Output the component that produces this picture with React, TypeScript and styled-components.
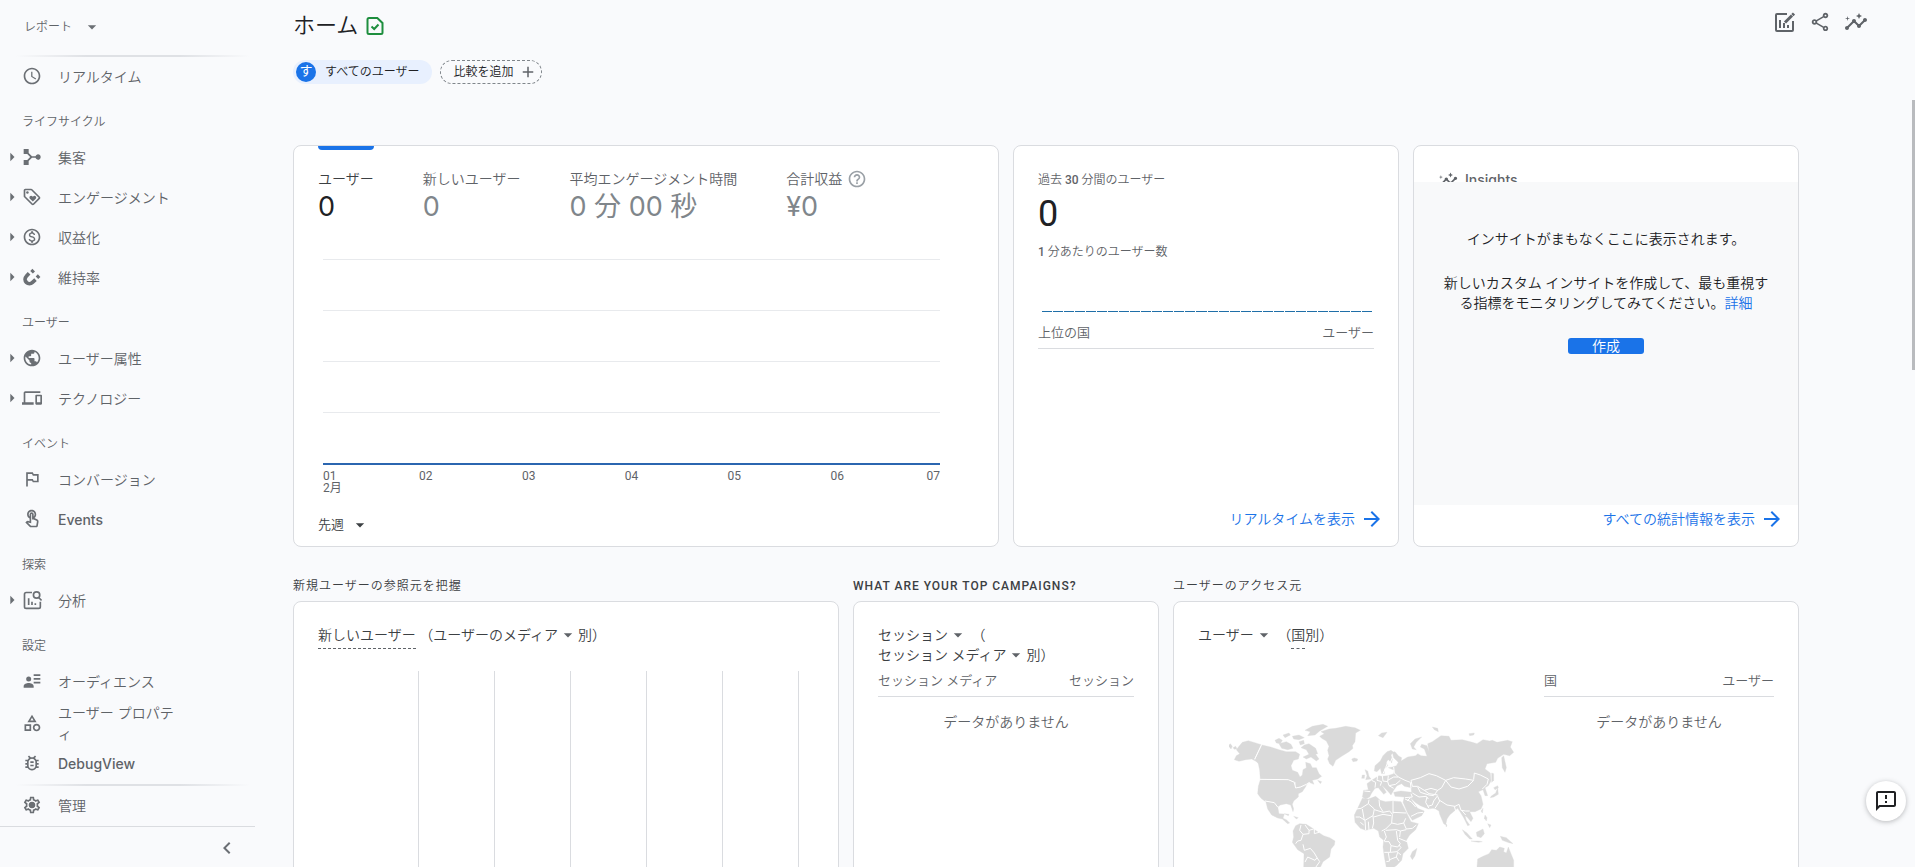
import React from "react";
import styled, { createGlobalStyle } from "styled-components";
import {
  MdAdd,
  MdArrowDropDown,
  MdArrowForward,
  MdArrowRight,
  MdChevronLeft,
  MdDevices,
  MdHelpOutline,
  MdInsights,
  MdOutlineBugReport,
  MdOutlineCategory,
  MdOutlineFeedback,
  MdOutlinedFlag,
  MdOutlineLoyalty,
  MdOutlineMonetizationOn,
  MdOutlineSettings,
  MdOutlineShare,
  MdOutlineTouchApp,
  MdPublic,
  MdSchedule,
} from "react-icons/md";

const uiFont = `Roboto, "Noto Sans CJK JP", sans-serif`;
const displayFont = `Inter, "Noto Sans CJK JP", sans-serif`;
const textWeight = 350;

const GlobalStyle = createGlobalStyle`
  *, *::before, *::after { box-sizing: border-box; }
  body {
    margin: 0;
    background: #f9fafc;
    color: #3c4043;
    font-family: ${uiFont};
    font-size: 14px;
    line-height: 20px;
    overflow: hidden;
  }
  h1, h2, h3, p, ul { margin: 0; padding: 0; font-size: 14px; font-weight: ${textWeight}; }
  button { border: 0; padding: 0; background: none; font: inherit; color: inherit; cursor: pointer; }
  a { color: inherit; text-decoration: none; }
  svg { display: block; flex: none; }
`;

const Page = styled.div`
  display: flex;
  height: 100vh;
  font-weight: ${textWeight};
`;

/* ---------- sidebar ---------- */

const Sidebar = styled.nav`
  flex: none;
  width: 255px;
  display: flex;
  flex-direction: column;
  color: #5f6368;
  font-family: ${displayFont};
  svg { color: #6b6f74; }
`;

const ReportPicker = styled.button`
  display: flex;
  align-items: center;
  gap: 10px;
  height: 55px;
  padding: 0 0 1px 24px;
  font-size: 12px;
`;

const FadeRule = styled.hr`
  flex: none;
  width: 234px;
  height: 2px;
  margin: 0 0 0 16px;
  border: 0;
  background: linear-gradient(90deg, transparent, #dfe1e5 30%, #dfe1e5 70%, transparent);
`;

const GroupTitle = styled.h2`
  height: 41px;
  padding: 15px 0 0 22px;
  font-size: 12px;
`;

const NavLink = styled.a<{ $tall?: boolean }>`
  display: grid;
  grid-template-columns: 20px 20px 138px;
  align-items: center;
  height: ${(p) => (p.$tall ? 42 : 40)}px;
  padding: 0 0 2px 2px;
  line-height: 21px;
`;

const NavText = styled.span<{ $latin?: boolean }>`
  padding-left: 16px;
  font-weight: ${(p) => (p.$latin ? 500 : textWeight)};
`;

const Expander = styled.span`
  display: flex;
`;

const Collapse = styled.div`
  flex: 1;
  display: flex;
  align-items: flex-start;
  justify-content: flex-end;
  padding: 9px 16px 0 0;
  border-top: 1px solid #dadce0;
`;

/* ---------- main frame ---------- */

const Main = styled.main`
  flex: 1;
  min-width: 0;
  overflow: hidden;
  padding: 0 116px 0 38px;
`;

const TitleBar = styled.header`
  display: flex;
  align-items: center;
  justify-content: space-between;
  height: 48px;
  margin-right: -80px;
`;

const TitleGroup = styled.div`
  display: flex;
  align-items: center;
  gap: 8px;
  padding-top: 3px;
`;

const PageTitle = styled.h1`
  font-size: 22px;
  line-height: 32px;
  color: #202124;
`;

const Tools = styled.div`
  display: flex;
  gap: 13px;
  padding: 0 11px 4px 0;
  color: #5f6368;
`;

const Chips = styled.div`
  display: flex;
  align-items: center;
  gap: 8px;
  height: 48px;
  font-size: 12px;
  color: #202124;
`;

const AudienceChip = styled.button`
  display: flex;
  align-items: center;
  gap: 9px;
  height: 24px;
  padding: 0 13px 0 3px;
  border-radius: 12px;
  background: #e8f0fe;
`;

const Avatar = styled.span`
  width: 20px;
  height: 20px;
  border-radius: 50%;
  background: #1a73e8;
  color: #fff;
  font-size: 13px;
  font-weight: 400;
  line-height: 18px;
  text-align: center;
`;

const AddChip = styled.button`
  display: flex;
  align-items: center;
  gap: 6px;
  height: 24px;
  padding: 0 4px 0 12px;
  border: 1px dashed #80868b;
  border-radius: 12px;
`;

const OverviewRow = styled.div`
  display: grid;
  grid-template-columns: 706fr 386fr 386fr;
  gap: 14px;
  margin-top: 49px;
`;

const ReportRow = styled.div`
  display: grid;
  grid-template-columns: 546fr 306fr 626fr;
  gap: 14px;
  margin-top: 22px;
`;

const Card = styled.section<{ $flush?: boolean }>`
  display: flex;
  flex-direction: column;
  min-width: 0;
  min-height: 402px;
  padding: 0 ${(p) => (p.$flush ? 0 : 24)}px;
  border: 1px solid #dadce0;
  border-radius: 8px;
  background: #fff;
`;

const SectionTitle = styled.h2<{ $latin?: boolean }>`
  height: 32px;
  padding-top: 7px;
  font-size: 12px;
  font-weight: ${(p) => (p.$latin ? 500 : textWeight)};
  letter-spacing: 1px;
  white-space: nowrap;
`;

/* ---------- users card ---------- */

const Metrics = styled.div`
  display: flex;
  gap: 49px;
`;

const Metric = styled.button<{ $active?: boolean }>`
  display: flex;
  flex-direction: column;
  align-items: flex-start;
  white-space: nowrap;
  color: ${(p) => (p.$active ? "#202124" : "#80868b")};
  &::before {
    content: "";
    width: 100%;
    height: 4px;
    margin-bottom: 19px;
    border-radius: 0 0 4px 4px;
    background: ${(p) => (p.$active ? "#1a73e8" : "transparent")};
  }
`;

const MetricLabel = styled.span<{ $active?: boolean }>`
  display: flex;
  align-items: center;
  gap: 5px;
  height: 20px;
  color: ${(p) => (p.$active ? "#3c4043" : "#5f6368")};
`;

const HelpMark = styled.span`
  color: #9aa0a6;
`;

const MetricValue = styled.span`
  margin-top: 2px;
  font-family: ${displayFont};
  font-size: 27px;
  font-weight: 400;
  line-height: 32px;
`;

const Chart = styled.div`
  margin: 36px 34px 0 5px;
`;

const GridBand = styled.div`
  height: 51px;
  border-top: 1px solid #e8eaed;
`;

const Series = styled.div`
  height: 2px;
  background: #2b66b0;
`;

const Ticks = styled.div`
  display: grid;
  grid-template-columns: 1fr 2fr 2fr 2fr 2fr 2fr 1fr;
  padding-top: 5px;
  font-size: 12px;
  font-weight: 400;
  line-height: 12px;
  color: #5f6368;
  text-align: center;
  span:first-child { text-align: left; }
  span:last-child { text-align: right; }
`;

const RangePicker = styled.button`
  display: flex;
  align-items: center;
  gap: 6px;
  align-self: flex-start;
  margin: auto 0 11px;
  font-size: 13px;
`;

/* ---------- realtime card ---------- */

const RealtimePanel = styled.div`
  padding: 0 24px;
`;

const Caption = styled.h3`
  padding-top: 24px;
  font-size: 12px;
  color: #5f6368;
`;

const SubCaption = styled.p`
  margin-top: 8px;
  font-size: 12px;
  color: #5f6368;
`;

const Numeral = styled.b`
  font-weight: 500;
`;

const BigNumber = styled.p`
  margin-top: 4px;
  font-size: 36px;
  font-weight: 400;
  line-height: 40px;
  color: #202124;
`;

const MinuteBars = styled.div`
  display: grid;
  grid-template-columns: repeat(30, 1fr);
  column-gap: 1px;
  margin: 49px 2px 11px 4px;
  span { height: 1px; background: #1f6fa8; }
`;

const DataTable = styled.table`
  align-self: start;
  width: 100%;
  border-collapse: collapse;
  font-size: 14px;
  color: #5f6368;
  th {
    padding: 0 0 5px;
    border-bottom: 1px solid #dadce0;
    font-size: 13px;
    font-weight: ${textWeight};
    text-align: left;
    white-space: nowrap;
  }
  th:last-child { text-align: right; }
  td { padding: 15px 0 0; text-align: center; }
`;

const CardLink = styled.a`
  display: flex;
  align-items: center;
  align-self: flex-end;
  gap: 5px;
  height: 20px;
  margin: auto 14px 17px 0;
  color: #1a73e8;
`;

/* ---------- insights card ---------- */

const InsightsHead = styled.h3`
  display: flex;
  align-items: flex-start;
  gap: 7px;
  height: 36px;
  padding: 24px 0 0 24px;
  overflow: hidden;
  font-family: ${displayFont};
  font-weight: 500;
  color: #5f6368;
`;

const InsightsBody = styled.div`
  display: flex;
  flex-direction: column;
  align-items: center;
  height: 323px;
  padding: 47px 24px 0;
  background: #f8f9fa;
  text-align: center;
  color: #202124;
  p + p { margin-top: 24px; }
`;

const InlineLink = styled.a`
  color: #1a73e8;
`;

const CreateButton = styled.button`
  width: 76px;
  height: 16px;
  margin-top: 25px;
  border-radius: 3px;
  background: #1a73e8;
  color: #fff;
  line-height: 14px;
`;

/* ---------- report cards ---------- */

const CardHeading = styled.h3`
  padding-top: 23px;
`;

const Dotted = styled.span`
  display: inline-block;
  height: 24px;
  border-bottom: 1px dashed #5f6368;
`;

const Picker = styled.button`
  display: inline-flex;
  align-items: center;
  height: 20px;
  vertical-align: top;
  svg { color: #5f6368; }
`;

const BarPlot = styled.div`
  flex: 1;
  display: grid;
  grid-template-columns: repeat(5, 76px);
  min-height: 300px;
  margin: 22px 0 0 100px;
  border-left: 1px solid #dadce0;
  span { border-right: 1px solid #dadce0; }
`;

const TableWrap = styled.div`
  padding-top: 6px;
`;

const CountrySplit = styled.div`
  display: grid;
  grid-template-columns: 1fr 230px;
  column-gap: 15px;
  padding-top: 22px;
`;

const MapBox = styled.div`
  display: flex;
  justify-content: flex-end;
  padding-top: 46px;
`;

/* ---------- overlays ---------- */

const FeedbackButton = styled.button`
  position: fixed;
  right: 9px;
  bottom: 46px;
  display: grid;
  place-items: center;
  width: 40px;
  height: 40px;
  border-radius: 50%;
  background: #fff;
  color: #202124;
  box-shadow: 0 1px 5px rgba(60, 64, 67, 0.35);
`;

const ScrollThumb = styled.div`
  position: fixed;
  top: 100px;
  right: 0;
  width: 3px;
  height: 270px;
  background: #b9bbbe;
`;

/* ---------- drawn icons ---------- */

const HubIcon = () => (
  <svg width="20" height="20" viewBox="0 0 24 24" fill="currentColor">
    <path d="M2 2.500h6v4.800l4 3.700h4.200a3.200 3.200 0 1 1 0 2H12l-4 3.700v4.800H2v-6h4.300l3.500-3.500-3.500-3.500H2z" />
  </svg>
);

const MagnetIcon = () => (
  <svg width="20" height="20" viewBox="0 0 24 24">
    <path d="M8.500 7.500l-3.300 3.600a5.100 5.100 0 0 0 7.400 7.400l3.600-3.300" fill="none" stroke="currentColor" strokeWidth="4.400" />
    <path d="M12.500 2.200l3.100 3.100-2.600 2.600-3.100-3.100zM19 8.800l3.100 3.100-2.600 2.600-3.100-3.100z" fill="currentColor" />
  </svg>
);

const AnalysisIcon = () => (
  <svg width="20" height="20" viewBox="0 0 24 24" fill="none" stroke="currentColor" strokeWidth="2">
    <path d="M12 3H5a2 2 0 0 0-2 2v15a2 2 0 0 0 2 2h15a2 2 0 0 0 2-2v-6M8 18v-8M12 18v-4M16 18v-2" />
    <circle cx="17.500" cy="6" r="3.800" />
    <path d="M20 9l3.500 3.500" />
  </svg>
);

const AudienceIcon = () => (
  <svg width="20" height="20" viewBox="0 0 24 24" fill="currentColor">
    <circle cx="8" cy="9.500" r="3" />
    <path d="M2 20v-2c0-2.400 3.500-3.700 6-3.700s6 1.300 6 3.700v2zM14 4h8v2h-8zM14 8.500h8v2h-8zM14 13h8v2h-8z" />
  </svg>
);

const GearIcon = () => (
  <svg width="20" height="20" viewBox="0 0 24 24">
    <MdOutlineSettings size={24} />
    <circle cx="12" cy="12" r="3.500" fill="currentColor" />
  </svg>
);

const EditChartIcon = () => (
  <svg width="24" height="24" viewBox="0 0 24 24" fill="none" stroke="currentColor" strokeWidth="2">
    <path d="M15 4H5a1 1 0 0 0-1 1v15a1 1 0 0 0 1 1h15a1 1 0 0 0 1-1v-9M8 18v-8M12 18v-5M16 18v-3" />
    <path d="M13 12.500l7-7" strokeWidth="3" />
    <path d="M20.400 5.100l1.600-1.600" strokeWidth="3" />
  </svg>
);

const VerifiedIcon = () => (
  <svg width="18" height="20" viewBox="0 0 18 20" fill="none" stroke="#1e8e3e" strokeWidth="2">
    <path d="M3 2h8.300L16.500 7v9.500A1.500 1.500 0 0 1 15 18H3a1.500 1.500 0 0 1-1.500-1.500v-13A1.500 1.500 0 0 1 3 2z" />
    <path d="M5.500 10.500l2.700 2.500 4.300-4.500" />
  </svg>
);

const land = [
  "120,198 130,186 148,181 187,193 166,235 176,246 158,236 140,238 120,243 106,238 112,226 122,220 112,208",
  "88,196 94,190 100,198 96,206",
  "102,202 110,198 114,205 106,207",
  "189,194 215,200 240,208 262,214 290,214 302,222 298,236 284,240 276,256 280,270 296,276 303,290 310,284 312,268 322,262 320,246 334,250 340,262 352,262 360,280 368,288 356,296 340,300 345,312 330,306 318,318 300,320 292,328 288,322 290,306 270,299 184,298 182,270 178,250 168,237",
  "184,298 268,299 286,306 290,324 300,322 322,316 310,334 298,340 298,350 284,362 280,372 284,386 282,394 275,374 262,370 244,374 236,380 226,368 200,364 186,354 176,340 178,318",
  "200,362 226,366 236,379 240,400 256,401 252,414 262,418 272,428 266,430 250,416 236,413 218,404 206,386",
  "228,180 240,174 250,180 244,190 232,188",
  "240,190 262,184 276,192 282,204 266,208 248,204",
  "252,164 270,158 274,164 258,172",
  "280,168 300,164 316,172 300,178 284,176",
  "300,184 314,180 316,190 304,194",
  "316,194 330,190 350,204 356,220 350,222 360,236 352,242 336,230 322,236 312,230 330,222 322,208 306,202",
  "318,150 340,138 372,132 386,138 362,152 348,164 326,166 334,154",
  "362,168 376,160 366,154 390,146 410,144 440,138 468,142 484,150 470,158 468,184 460,196 462,204 450,214 428,228 410,240 402,258 392,250 386,236 390,226 386,210 390,198 382,182 368,174",
  "458,236 466,233 476,236 474,242 462,244",
  "356,300 368,304 364,310",
  "256,400 270,402 268,406",
  "284,408 298,412 292,416",
  "282,452 290,436 302,430 322,432 344,446 358,456 374,466 392,472 408,482 406,494 396,506 392,530 372,544 364,561 314,561 315,520 296,508 280,486 284,470",
  "498,268 506,272 510,288 516,296 500,298 504,286",
  "490,284 497,284 496,294 488,294",
  "526,272 528,256 544,242 552,226 564,214 576,210 584,216 576,224 580,238 578,248 568,238 562,246 566,256 556,266 556,280 548,280 544,264 534,274",
  "538,166 548,158 564,156 552,172",
  "634,190 648,176 668,170 652,186 644,200 652,208 640,206",
  "700,140 716,144 718,154 706,148",
  "810,160 826,158 824,164 812,166",
  "568,262 580,260 592,256 598,246 584,232 580,216 588,214 598,226 608,232 606,242 626,230 650,226 656,220 666,226 684,228 676,206 664,200 668,192 684,196 690,214 686,190 700,184 726,166 750,168 756,180 790,178 820,186 834,190 852,178 872,182 880,180 894,186 926,180 940,184 934,200 944,216 932,226 914,222 896,234 890,246 864,250 858,266 874,278 876,302 868,316 858,322 866,346 858,346 852,328 838,334 846,346 852,372 846,386 828,394 812,394 822,414 816,424 804,410 798,406 802,420 812,434 806,436 794,412 784,396 776,384 766,392 752,404 744,416 740,434 734,430 722,402 720,392 710,386 702,384 688,386 664,376 648,366 634,352 644,368 656,384 676,392 668,406 640,420 626,398 612,366 616,350 588,348 584,336 606,332 638,336 636,322 616,318 608,310 594,316 584,330 576,344 568,334 556,322 548,314 562,336 554,342 538,322 528,324 518,338 512,350 500,356 490,350 494,330 508,328 504,310 518,300 530,292 540,286 548,288 566,286 584,280 586,270",
  "908,232 914,226 922,262 918,276 910,262",
  "878,278 884,280 884,300 878,306",
  "884,322 896,316 898,322 888,328",
  "876,348 890,338 896,322 898,342 884,350 874,352",
  "846,392 852,384 850,398",
  "490,354 508,356 530,348 544,360 560,364 580,362 606,364 612,376 624,400 636,424 658,430 650,448 632,464 622,480 628,504 612,520 608,540 592,556 584,561 562,561 556,530 552,500 554,480 542,470 538,452 524,444 500,450 484,444 468,426 466,404 476,384",
  "654,504 648,526 640,538 634,528 640,514",
  "790,448 804,458 820,476 812,476 798,462",
  "832,456 852,446 856,460 846,472 834,468",
  "858,404 864,412 862,422 856,414",
  "866,430 876,434 872,442",
  "816,482 838,482 850,484 838,486",
  "904,468 922,472 942,490 926,486 910,480",
  "740,430 744,434 742,440",
  "834,561 836,536 852,528 870,520 878,508 892,510 902,500 916,504 914,514 922,518 928,500 936,520 944,540 944,561",
];

const borders = [
  "188,192 167,237",
  "183,297 268,298 286,306 290,323 304,320 322,312 332,306",
  "198,362 226,367 236,380",
  "306,434 302,450 312,462 306,480 296,482 290,490",
  "318,434 330,450 344,446",
  "330,450 330,460 312,462",
  "346,446 346,460 360,456",
  "312,492 316,510 334,504 346,518 354,532 348,540 326,530 318,545",
  "354,532 362,544 350,561",
  "568,240 560,262 552,280",
  "580,232 570,256",
  "584,260 586,278 598,290 618,300 634,306 636,324",
  "518,300 530,306 528,322",
  "536,286 534,300 548,304 544,316",
  "550,286 552,302 566,304 570,316 584,324",
  "568,286 566,304",
  "566,300 584,290 598,290",
  "570,316 590,312 604,300",
  "496,332 514,334",
  "636,300 664,292 690,280 712,286 740,300 728,322 716,330 696,324 676,330 656,318 640,318 636,300",
  "740,300 764,292 800,296 824,300 806,318 780,326 756,320 740,300",
  "824,298 826,278 844,284 868,296 864,312 850,326",
  "656,320 664,336 690,344 704,346 716,330",
  "676,330 690,340 716,344",
  "640,338 660,350 682,348 688,356",
  "684,350 680,366 690,384",
  "716,346 704,362 700,374 686,378",
  "716,348 722,362 708,384",
  "722,360 744,374 768,378 780,372",
  "766,378 770,392",
  "780,372 786,390 800,392 812,392",
  "788,390 800,404",
  "618,352 640,350 636,340",
  "618,356 636,364 650,380",
  "636,408 656,398 672,396",
  "624,362 634,352",
  "510,358 508,370 486,384 472,386",
  "508,370 526,386 522,406 498,420 482,410 470,410",
  "490,386 496,420",
  "526,388 552,396 572,392",
  "540,358 542,378 552,394",
  "582,362 582,400",
  "582,396 622,398",
  "572,392 580,402 578,428 560,446 548,452",
  "522,406 524,428 520,444",
  "524,410 552,402 576,406",
  "498,420 500,450",
  "484,426 494,434",
  "508,424 510,450",
  "578,428 596,432 614,428 620,414",
  "614,428 622,446 640,444 652,434",
  "560,450 592,448 604,452 622,448",
  "556,452 562,470 556,482",
  "592,452 596,480 604,490 596,500 576,496 570,484 556,484",
  "600,474 624,484",
  "604,452 602,470",
  "576,496 574,516 556,516",
  "574,516 594,514 606,502 600,494",
  "594,514 606,524",
  "568,518 572,542 562,544",
  "572,538 592,530 596,516",
  "592,530 600,542",
];

const WorldMap = () => (
  <svg width="300" height="260" viewBox="90 110 900 780" role="img" aria-label="国別ユーザーの地図">
    <g fill="#dadada" stroke="#dadada" strokeWidth="1">
      {land.map((points) => (
        <polygon key={points} points={points} />
      ))}
    </g>
    <g fill="none" stroke="#fff" strokeWidth="3" strokeLinejoin="round">
      {borders.map((points) => (
        <polyline key={points} points={points} />
      ))}
    </g>
  </svg>
);

/* ---------- content ---------- */

type NavItem = { label: string; icon: React.ReactNode; expandable?: boolean; latin?: boolean; tall?: boolean };
type NavGroup = { title?: string; items: NavItem[] };

const groups: NavGroup[] = [
  { items: [{ label: "リアルタイム", icon: <MdSchedule size={20} /> }] },
  {
    title: "ライフサイクル",
    items: [
      { label: "集客", icon: <HubIcon />, expandable: true },
      { label: "エンゲージメント", icon: <MdOutlineLoyalty size={20} />, expandable: true },
      { label: "収益化", icon: <MdOutlineMonetizationOn size={20} />, expandable: true },
      { label: "維持率", icon: <MagnetIcon />, expandable: true },
    ],
  },
  {
    title: "ユーザー",
    items: [
      { label: "ユーザー属性", icon: <MdPublic size={20} />, expandable: true },
      { label: "テクノロジー", icon: <MdDevices size={20} />, expandable: true },
    ],
  },
  {
    title: "イベント",
    items: [
      { label: "コンバージョン", icon: <MdOutlinedFlag size={20} /> },
      { label: "Events", icon: <MdOutlineTouchApp size={20} />, latin: true },
    ],
  },
  { title: "探索", items: [{ label: "分析", icon: <AnalysisIcon />, expandable: true }] },
  {
    title: "設定",
    items: [
      { label: "オーディエンス", icon: <AudienceIcon /> },
      { label: "ユーザー プロパティ", icon: <MdOutlineCategory size={20} />, tall: true },
      { label: "DebugView", icon: <MdOutlineBugReport size={20} />, latin: true },
    ],
  },
];

const NavRow = ({ item }: { item: NavItem }) => (
  <NavLink href="#" $tall={item.tall}>
    <Expander>{item.expandable && <MdArrowRight size={20} />}</Expander>
    {item.icon}
    <NavText $latin={item.latin}>{item.label}</NavText>
  </NavLink>
);

const Drop = ({ children }: { children: React.ReactNode }) => (
  <Picker type="button">
    {children}
    <MdArrowDropDown size={20} />
  </Picker>
);

const days = ["01", "02", "03", "04", "05", "06", "07"];

const EmptyTable = ({ left, right }: { left: string; right: string }) => (
  <DataTable>
    <thead>
      <tr>
        <th scope="col">{left}</th>
        <th scope="col">{right}</th>
      </tr>
    </thead>
    <tbody>
      <tr>
        <td colSpan={2}>データがありません</td>
      </tr>
    </tbody>
  </DataTable>
);

export default function App() {
  return (
    <Page>
      <GlobalStyle />
      <Sidebar>
        <ReportPicker type="button">
          レポート
          <MdArrowDropDown size={20} />
        </ReportPicker>
        <FadeRule />
        {groups.map((group, i) => (
          <div key={i}>
            {group.title && <GroupTitle>{group.title}</GroupTitle>}
            {group.items.map((item) => (
              <NavRow key={item.label} item={item} />
            ))}
          </div>
        ))}
        <FadeRule />
        <NavRow item={{ label: "管理", icon: <GearIcon /> }} />
        <Collapse>
          <button type="button" aria-label="折りたたむ">
            <MdChevronLeft size={24} />
          </button>
        </Collapse>
      </Sidebar>

      <Main>
        <TitleBar>
          <TitleGroup>
            <PageTitle>ホーム</PageTitle>
            <VerifiedIcon />
          </TitleGroup>
          <Tools>
            <button type="button" aria-label="レポートをカスタマイズ">
              <EditChartIcon />
            </button>
            <button type="button" aria-label="共有">
              <MdOutlineShare size={22} />
            </button>
            <button type="button" aria-label="インサイト">
              <MdInsights size={24} />
            </button>
          </Tools>
        </TitleBar>

        <Chips>
          <AudienceChip type="button">
            <Avatar>す</Avatar>
            すべてのユーザー
          </AudienceChip>
          <AddChip type="button">
            比較を追加
            <MdAdd size={18} color="#5f6368" />
          </AddChip>
        </Chips>

        <OverviewRow>
          <Card>
            <Metrics>
              <Metric type="button" $active>
                <MetricLabel $active>ユーザー</MetricLabel>
                <MetricValue>0</MetricValue>
              </Metric>
              <Metric type="button">
                <MetricLabel>新しいユーザー</MetricLabel>
                <MetricValue>0</MetricValue>
              </Metric>
              <Metric type="button">
                <MetricLabel>平均エンゲージメント時間</MetricLabel>
                <MetricValue>0 分 00 秒</MetricValue>
              </Metric>
              <Metric type="button">
                <MetricLabel>
                  合計収益
                  <HelpMark>
                    <MdHelpOutline size={20} />
                  </HelpMark>
                </MetricLabel>
                <MetricValue>¥0</MetricValue>
              </Metric>
            </Metrics>
            <Chart>
              <GridBand />
              <GridBand />
              <GridBand />
              <GridBand />
              <Series />
              <Ticks>
                {days.map((day, i) => (
                  <span key={day}>
                    {day}
                    {i === 0 && (
                      <>
                        <br />
                        2月
                      </>
                    )}
                  </span>
                ))}
              </Ticks>
            </Chart>
            <RangePicker type="button">
              先週
              <MdArrowDropDown size={20} />
            </RangePicker>
          </Card>

          <Card $flush>
            <RealtimePanel>
              <Caption>
                過去 <Numeral>30</Numeral> 分間のユーザー
              </Caption>
              <BigNumber>0</BigNumber>
              <SubCaption>
                <Numeral>1</Numeral> 分あたりのユーザー数
              </SubCaption>
              <MinuteBars>
                {Array.from({ length: 30 }, (_, i) => (
                  <span key={i} />
                ))}
              </MinuteBars>
              <DataTable>
                <thead>
                  <tr>
                    <th scope="col">上位の国</th>
                    <th scope="col">ユーザー</th>
                  </tr>
                </thead>
              </DataTable>
            </RealtimePanel>
            <CardLink href="#">
              リアルタイムを表示
              <MdArrowForward size={24} />
            </CardLink>
          </Card>

          <Card $flush>
            <InsightsHead>
              <MdInsights size={20} />
              Insights
            </InsightsHead>
            <InsightsBody>
              <p>インサイトがまもなくここに表示されます。</p>
              <p>
                新しいカスタム インサイトを作成して、最も重視する指標をモニタリングしてみてください。
                <InlineLink href="#">詳細</InlineLink>
              </p>
              <CreateButton type="button">作成</CreateButton>
            </InsightsBody>
            <CardLink href="#">
              すべての統計情報を表示
              <MdArrowForward size={24} />
            </CardLink>
          </Card>
        </OverviewRow>

        <ReportRow>
          <div>
            <SectionTitle>新規ユーザーの参照元を把握</SectionTitle>
            <Card>
              <CardHeading>
                <Dotted>新しいユーザー</Dotted> （<Drop>ユーザーのメディア</Drop>別）
              </CardHeading>
              <BarPlot>
                <span />
                <span />
                <span />
                <span />
                <span />
              </BarPlot>
            </Card>
          </div>
          <div>
            <SectionTitle $latin>WHAT ARE YOUR TOP CAMPAIGNS?</SectionTitle>
            <Card>
              <CardHeading>
                <Drop>セッション</Drop> （<br />
                <Drop>セッション メディア</Drop>別）
              </CardHeading>
              <TableWrap>
                <EmptyTable left="セッション メディア" right="セッション" />
              </TableWrap>
            </Card>
          </div>
          <div>
            <SectionTitle>ユーザーのアクセス元</SectionTitle>
            <Card>
              <CardHeading>
                <Drop>ユーザー</Drop> （<Dotted>国</Dotted>別）
              </CardHeading>
              <CountrySplit>
                <MapBox>
                  <WorldMap />
                </MapBox>
                <EmptyTable left="国" right="ユーザー" />
              </CountrySplit>
            </Card>
          </div>
        </ReportRow>
      </Main>

      <ScrollThumb />
      <FeedbackButton type="button" aria-label="フィードバック">
        <MdOutlineFeedback size={24} />
      </FeedbackButton>
    </Page>
  );
}
